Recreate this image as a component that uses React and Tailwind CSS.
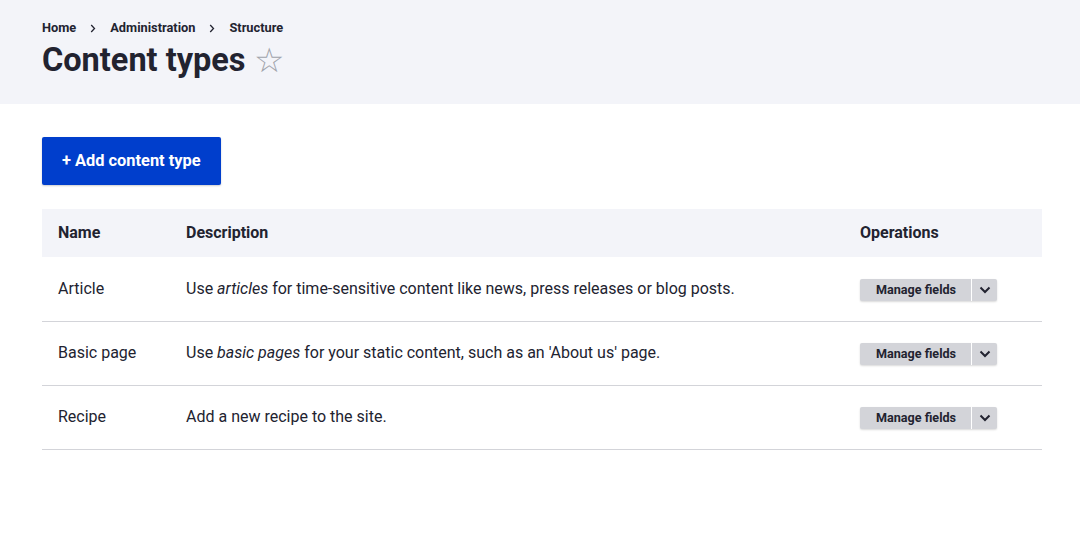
import React from "react";

const rows = [
  { name: "Article", desc: <>Use <em>articles</em> for time-sensitive content like news, press releases or blog posts.</> },
  { name: "Basic page", desc: <>Use <em>basic pages</em> for your static content, such as an 'About us' page.</> },
  { name: "Recipe", desc: <>Add a new recipe to the site.</> },
];

function Ops() {
  return (
    <div className="inline-flex h-[22px] rounded-[2px] bg-[#d3d4d9] shadow-[0_1px_2px_rgba(0,0,0,0.15)]">
      <button className="pl-[16px] pr-[15px] text-[12.6px] font-bold text-[#222330] leading-[22px]">Manage fields</button>
      <span className="w-px bg-white"></span>
      <button className="w-[25px] flex items-center justify-center text-[#222330]">
        <svg width="12" height="8" viewBox="0 0 12 8" fill="none" stroke="currentColor" strokeWidth="2"><path d="M1.5 1.5 L6 6 L10.5 1.5" /></svg>
      </button>
    </div>
  );
}

function Sep() {
  return (
    <svg className="mx-[14px]" width="6" height="9" viewBox="0 0 6 9" fill="none" stroke="#222330" strokeWidth="1.3"><path d="M1.2 1 L4.5 4.5 L1.2 8" /></svg>
  );
}

export default function App() {
  return (
    <div className="w-[1080px] h-[558px] bg-white text-[#222330]" style={{ fontFamily: "Roboto, 'Liberation Sans', sans-serif" }}>
      <div className="bg-[#f3f4f9] h-[104px] px-[42px] pt-[20px]">
        <div className="flex items-center text-[12.8px] font-bold leading-[16px]">
          <span>Home</span>
          <Sep />
          <span>Administration</span>
          <Sep />
          <span>Structure</span>
        </div>
        <div className="flex items-center mt-[4px]">
          <h1 className="text-[32.5px] font-bold leading-[40px]">Content types</h1>
          <span className="ml-[8px] text-[34px] text-[#a0a3ab] leading-[40px]">☆</span>
        </div>
      </div>
      <div className="px-[42px] pt-[33px]">
        <button className="h-[48px] px-[20px] bg-[#003ecc] text-white text-[16.4px] font-bold rounded-[2px] shadow-[0_1px_2px_rgba(0,0,0,0.2)]">+ Add content type</button>
        <table className="w-[1000px] mt-[24px] text-[16px] border-collapse">
          <thead>
            <tr className="bg-[#f3f4f9] h-[48px] text-left">
              <th className="pl-[16px] w-[144px] font-bold">Name</th>
              <th className="font-bold">Description</th>
              <th className="w-[182px] font-bold">Operations</th>
            </tr>
          </thead>
          <tbody>
            {rows.map((r) => (
              <tr key={r.name} className="h-[64px] border-b border-[#d3d4d9]">
                <td className="pl-[16px]">{r.name}</td>
                <td>{r.desc}</td>
                <td><Ops /></td>
              </tr>
            ))}
          </tbody>
        </table>
      </div>
    </div>
  );
}
